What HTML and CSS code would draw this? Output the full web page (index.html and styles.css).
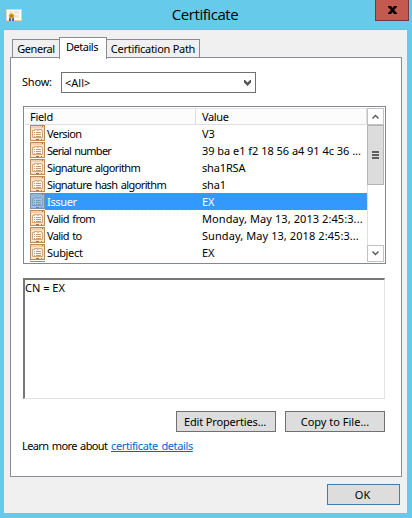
FILE: index.html
```html
<!DOCTYPE html>
<html lang="en">
<head>
<meta charset="utf-8">
<title>Certificate</title>
<link rel="stylesheet" href="styles.css">
</head>
<body>
<svg class="defs" width="0" height="0" aria-hidden="true">
  <symbol id="field" viewBox="0 0 15 16">
    <path fill="#b98a5c" d="M0 0h15v16H0z"/>
    <path fill="#fce4cc" d="M1 1h13v14H1z"/>
    <path fill="#f3cfab" d="M1 1h13v2H1z"/>
    <path fill="#a86f3b" d="M12 1h1v1h-1zM6 14h3v1H6zM11 14h1v1h-1z"/>
    <path fill="#fff6ea" stroke="#d0a67c" d="M2.500 5.500h2v-1h3v1h1v-1h3v1h1v7h-10z"/>
    <path fill="#c59a6f" d="M4 7h1v1H4zM6 7h5v1H6zM4 9h1v1H4zM6 9h5v1H6zM4 11h1v1H4zM6 11h5v1H6z"/>
  </symbol>
</svg>
<div class="window">
  <header class="titlebar">
    <svg class="app-icon" width="17" height="13" viewBox="0 0 17 13">
      <path fill="#e3d3b8" d="M0 0h16v12H0z"/>
      <path fill="#fffdf6" d="M1 1h14v10H1z"/>
      <path fill="#e7e9ed" d="M3 2h4v2H3zM8 2h5v3H8zM8 6h5v3H8z"/>
      <path fill="#3665b8" d="M3 9h2v3H3zM6 9h2v3H6z"/>
      <circle cx="5.500" cy="7" r="2.700" fill="#dfa024"/>
      <circle cx="5.500" cy="7" r="1.200" fill="#b27610"/>
    </svg>
    <h1>Certificate</h1>
    <button class="close" aria-label="Close"><svg width="9" height="8" viewBox="0 0 9 8"><path d="M0 0h3l1.500 2L6 0h3v1L6 4l3 3v1H6L4.500 6 3 8H0V7l3-3-3-3z"/></svg></button>
  </header>
  <main class="body">
    <nav class="tabs">
      <div class="tab general">General</div>
      <div class="tab active">Details</div>
      <div class="tab path">Certification Path</div>
    </nav>
    <section class="panel">
      <div class="show"><span class="show-label">Show:</span>
        <div class="select"><span>&lt;All&gt;</span><svg width="7" height="6" viewBox="0 0 7 6"><path d="M0 0h1l2.500 2.500L6 0h1v2.500L3.500 6 0 2.500z" fill="#555"/></svg></div>
      </div>
      <div class="list">
        <div class="table">
          <div class="row head"><span class="name">Field</span><span class="value">Value</span></div>
          <div class="rows">
            <div class="row"><svg class="ico"><use href="#field"/></svg><span class="name">Version</span><span class="value">V3</span></div>
            <div class="row"><svg class="ico"><use href="#field"/></svg><span class="name tight">Serial number</span><span class="value serial">39 ba e1 f2 18 56 a4 91 4c 36 ...</span></div>
            <div class="row"><svg class="ico"><use href="#field"/></svg><span class="name">Signature algorithm</span><span class="value">sha1RSA</span></div>
            <div class="row"><svg class="ico"><use href="#field"/></svg><span class="name">Signature hash algorithm</span><span class="value">sha1</span></div>
            <div class="row selected"><svg class="ico"><use href="#field"/></svg><span class="name wide">Issuer</span><span class="value">EX</span></div>
            <div class="row"><svg class="ico"><use href="#field"/></svg><span class="name">Valid from</span><span class="value date">Monday, May 13, 2013 2:45:3...</span></div>
            <div class="row"><svg class="ico"><use href="#field"/></svg><span class="name">Valid to</span><span class="value date">Sunday, May 13, 2018 2:45:3...</span></div>
            <div class="row"><svg class="ico"><use href="#field"/></svg><span class="name wide">Subject</span><span class="value">EX</span></div>
            <div class="row"><svg class="ico"><use href="#field"/></svg></div>
          </div>
        </div>
        <div class="scroll">
          <div class="arrow"><svg width="7" height="5" viewBox="0 0 7 5"><path d="M.5 4.500l3-3 3 3" fill="none" stroke="#555" stroke-width="1.400"/></svg></div>
          <div class="thumb"><i></i><i></i><i></i></div>
          <div class="track"></div>
          <div class="arrow"><svg width="7" height="5" viewBox="0 0 7 5"><path d="M.5 .5l3 3 3-3" fill="none" stroke="#555" stroke-width="1.400"/></svg></div>
        </div>
      </div>
      <div class="detail">CN = EX</div>
      <div class="actions"><button class="btn edit">Edit Properties...</button><button class="btn copy">Copy to File...</button></div>
      <p class="learn"><span>Learn more about</span><a>certificate details</a></p>
    </section>
    <footer><button class="btn ok">OK</button></footer>
  </main>
</div>
</body>
</html>
```
FILE: styles.css
```css
* { box-sizing: border-box; }
body { margin: 0; font: 11px/17px "Noto Sans", "Liberation Sans", sans-serif; color: #000; }
button { font: inherit; color: inherit; padding: 0; border-radius: 0; }
.defs { position: absolute; }
.window { width: 412px; height: 518px; background: #66cbea; padding: 0 5px 4px 4px; overflow: hidden; }
.titlebar { height: 29px; display: grid; grid-template-columns: 17px 1fr 34px; margin-left: 2px; margin-right: -2px; }
.app-icon { margin-top: 9px; }
h1 { margin: 0; padding-left: 12px; text-align: center; font: 15px/29px "Open Sans", sans-serif; letter-spacing: -.45px; }
.close { height: 21px; background: #c4594f; border: 1px solid #683c40; border-top: 0; display: flex; justify-content: center; align-items: center; }
.body { height: 485px; background: #f0f0f0; border-top: 1px solid #70bcd5; border-bottom: 1px solid #80bdd2; padding: 7px 6px 0; }
.tabs { display: flex; align-items: flex-start; height: 20px; padding-left: 2px; position: relative; z-index: 1; }
.tab { border: 1px solid #898c95; border-bottom: 0; background: #f0f0f0; text-align: center; white-space: nowrap; }
.general, .path { height: 18px; margin-top: 2px; }
.general { width: 48px; letter-spacing: -.45px; }
.path { width: 94px; margin-left: -1px; letter-spacing: -.28px; }
.tab.active { width: 48px; height: 22px; margin-left: -1px; padding-right: 2px; background: #fff; letter-spacing: -.5px; }
.panel { width: 392px; height: 420px; border: 1px solid #898c95; background: #fff; padding: 14px 0 0 12px; }
.show { display: flex; height: 21px; }
.show-label { width: 38px; margin-left: -1px; padding-top: 1px; letter-spacing: -.2px; }
.select { margin-left: 1px; width: 195px; height: 21px; border: 1px solid #707070; display: flex; justify-content: space-between; align-items: center; padding: 0 4px 0 3px; }
.list { width: 363px; height: 158px; margin-top: 13px; border: 1px solid #828790; padding: 1px; display: flex; }
.table { width: 342px; }
.row { display: flex; height: 17px; white-space: nowrap; line-height: 17px; }
.head { background: #fcfcfc; border-bottom: 1px solid #dedede; border-top: 1px solid #e5e5e5; line-height: 16px; letter-spacing: -.3px; }
.head .name { width: 171px; padding-left: 5px; border-right: 1px solid #dedede; }
.head .value { padding-left: 6px; border-right: 1px solid #dedede; flex: 1; letter-spacing: -.35px; }
.rows { height: 137px; overflow: hidden; }
.ico { width: 15px; height: 16px; margin-left: 5px; flex: none; }
.rows .name { width: 152px; padding-left: 2px; letter-spacing: -.6px; word-spacing: 1px; }
.rows .name.tight { letter-spacing: -.75px; }
.rows .name.wide { letter-spacing: -.33px; }
.rows .value { width: 170px; padding-left: 5px; letter-spacing: -.15px; }
.rows .value.serial { letter-spacing: -.03px; }
.rows .value.date { letter-spacing: .08px; }
.selected .name, .selected .value { background: #3399ff; color: #fff; border-top: 1px dotted #d07532; border-bottom: 1px dotted #d07532; line-height: 15px; }
.selected .value { border-right: 1px dotted #d07532; }
.selected .ico { background: #3399ff; }
.selected use { opacity: .5; }
.scroll { width: 17px; display: flex; flex-direction: column; background: #fff; }
.arrow { height: 17px; border: 1px solid #c2c2c2; display: flex; justify-content: center; align-items: center; }
.thumb { height: 60px; background: #dcdcdc; border: 1px solid #b5b5b5; display: flex; flex-direction: column; justify-content: center; align-items: center; gap: 1px; }
.thumb i { width: 7px; height: 2px; background: #606060; }
.track { flex: 1; border-left: 1px solid #e0e0e0; }
.detail { width: 362px; height: 121px; margin-top: 14px; border: 1px solid #e3e3e3; border-top: 2px solid #777; border-left: 2px solid #777; line-height: 15px; }
.actions { display: flex; margin: 12px 0 0 153px; gap: 9px; }
.btn { width: 100px; height: 21px; background: #ddd; border: 1px solid #707070; }
.edit { letter-spacing: -.15px; padding-right: 2px; }
.learn { display: flex; margin: 5px 0 0 -1px; letter-spacing: -.6px; word-spacing: 1px; }
.learn span { width: 89px; }
.learn a { color: #0066cc; text-decoration: underline; letter-spacing: -.38px; }
footer { display: flex; justify-content: flex-end; padding-top: 7px; }
.ok { width: 73px; border-color: #3c7fb1; margin-right: 1px; padding-right: 2px; }
```
